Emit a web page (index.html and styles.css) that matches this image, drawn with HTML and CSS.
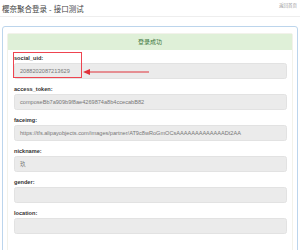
FILE: index.html
```html
<!doctype html>
<html>
<head>
	<meta charset="utf-8" />
	<title>樱奈聚合登录 - 接口测试</title>
	<link rel="stylesheet" href="styles.css">
</head>
<body>
	<div class="top">
		<span class="title">樱奈聚合登录 - 接口测试</span>
		<a class="back" href="#">返回首页</a>
	</div>
	<div class="outer">
		<div class="panel">
			<div class="panel-heading">登录成功</div>
			<div class="panel-body">
				<div class="group first">
					<label>social_uid:</label>
					<div class="field">2088202087213629</div>
					<div class="mark"></div>
					<svg class="arrow" width="70" height="8" viewBox="0 0 70 8">
						<line x1="6" y1="4" x2="66" y2="4" stroke="#e0323a" stroke-width="1.2" />
						<polygon points="0,4 7,1 7,7" fill="#e0323a" />
					</svg>
				</div>
				<div class="group">
					<label>access_token:</label>
					<div class="field">composeBb7a909b9f8ae4269874a8b4ccecabB82</div>
				</div>
				<div class="group">
					<label>faceimg:</label>
					<div class="field">https://tfs.alipayobjects.com/images/partner/AT9c8wRoGmOCsAAAAAAAAAAAAADt2AA</div>
				</div>
				<div class="group">
					<label>nickname:</label>
					<div class="field">玖</div>
				</div>
				<div class="group">
					<label>gender:</label>
					<div class="field"></div>
				</div>
				<div class="group">
					<label>location:</label>
					<div class="field"></div>
				</div>
			</div>
		</div>
	</div>
</body>
</html>
```

FILE: styles.css
```css
body
{
	margin: 0;
	font-family: "Liberation Sans", "Noto Sans CJK SC", sans-serif;
	color: #333;
	background: #fff;
}

.top
{
	display: flex;
	justify-content: space-between;
	align-items: flex-start;
	height: 16px;
	padding: 0 3px 0 2px;
	border-bottom: 1px solid #eee;
}

.title
{
	font-size: 7.5px;
	line-height: 19px;
	color: #444;
}

.back
{
	font-size: 4.5px;
	line-height: 12px;
	color: #999;
	text-decoration: none;
}

.outer
{
	margin: 9px 2px 0;
	padding: 6px 4px;
	border: 1px solid #bcd5ec;
	border-radius: 3px;
}

.panel
{
	border: 1px solid #f2f2ea;
	border-radius: 2px;
}

.panel-heading
{
	height: 16px;
	line-height: 16px;
	text-align: center;
	font-size: 6px;
	color: #3c763d;
	background: #dff0d8;
}

.panel-body
{
	padding: 4px 5px 10px 6px;
}

.group
{
	position: relative;
	margin-bottom: 6.1px;
}

.group label
{
	display: block;
	height: 9px;
	line-height: 9px;
	font-size: 5.6px;
	font-weight: bold;
	color: #333;
}

.field
{
	height: 14px;
	line-height: 14px;
	padding: 0 5px;
	font-size: 5.6px;
	color: #777;
	background: #ebebeb;
	border: 0.5px solid #e2e2e2;
	border-radius: 2.5px;
	white-space: nowrap;
	overflow: hidden;
}

.mark
{
	position: absolute;
	left: -1px;
	top: -2px;
	width: 67px;
	height: 24px;
	border: 1px solid #ee4450;
}

.arrow
{
	position: absolute;
	left: 69px;
	top: 14px;
}
```
